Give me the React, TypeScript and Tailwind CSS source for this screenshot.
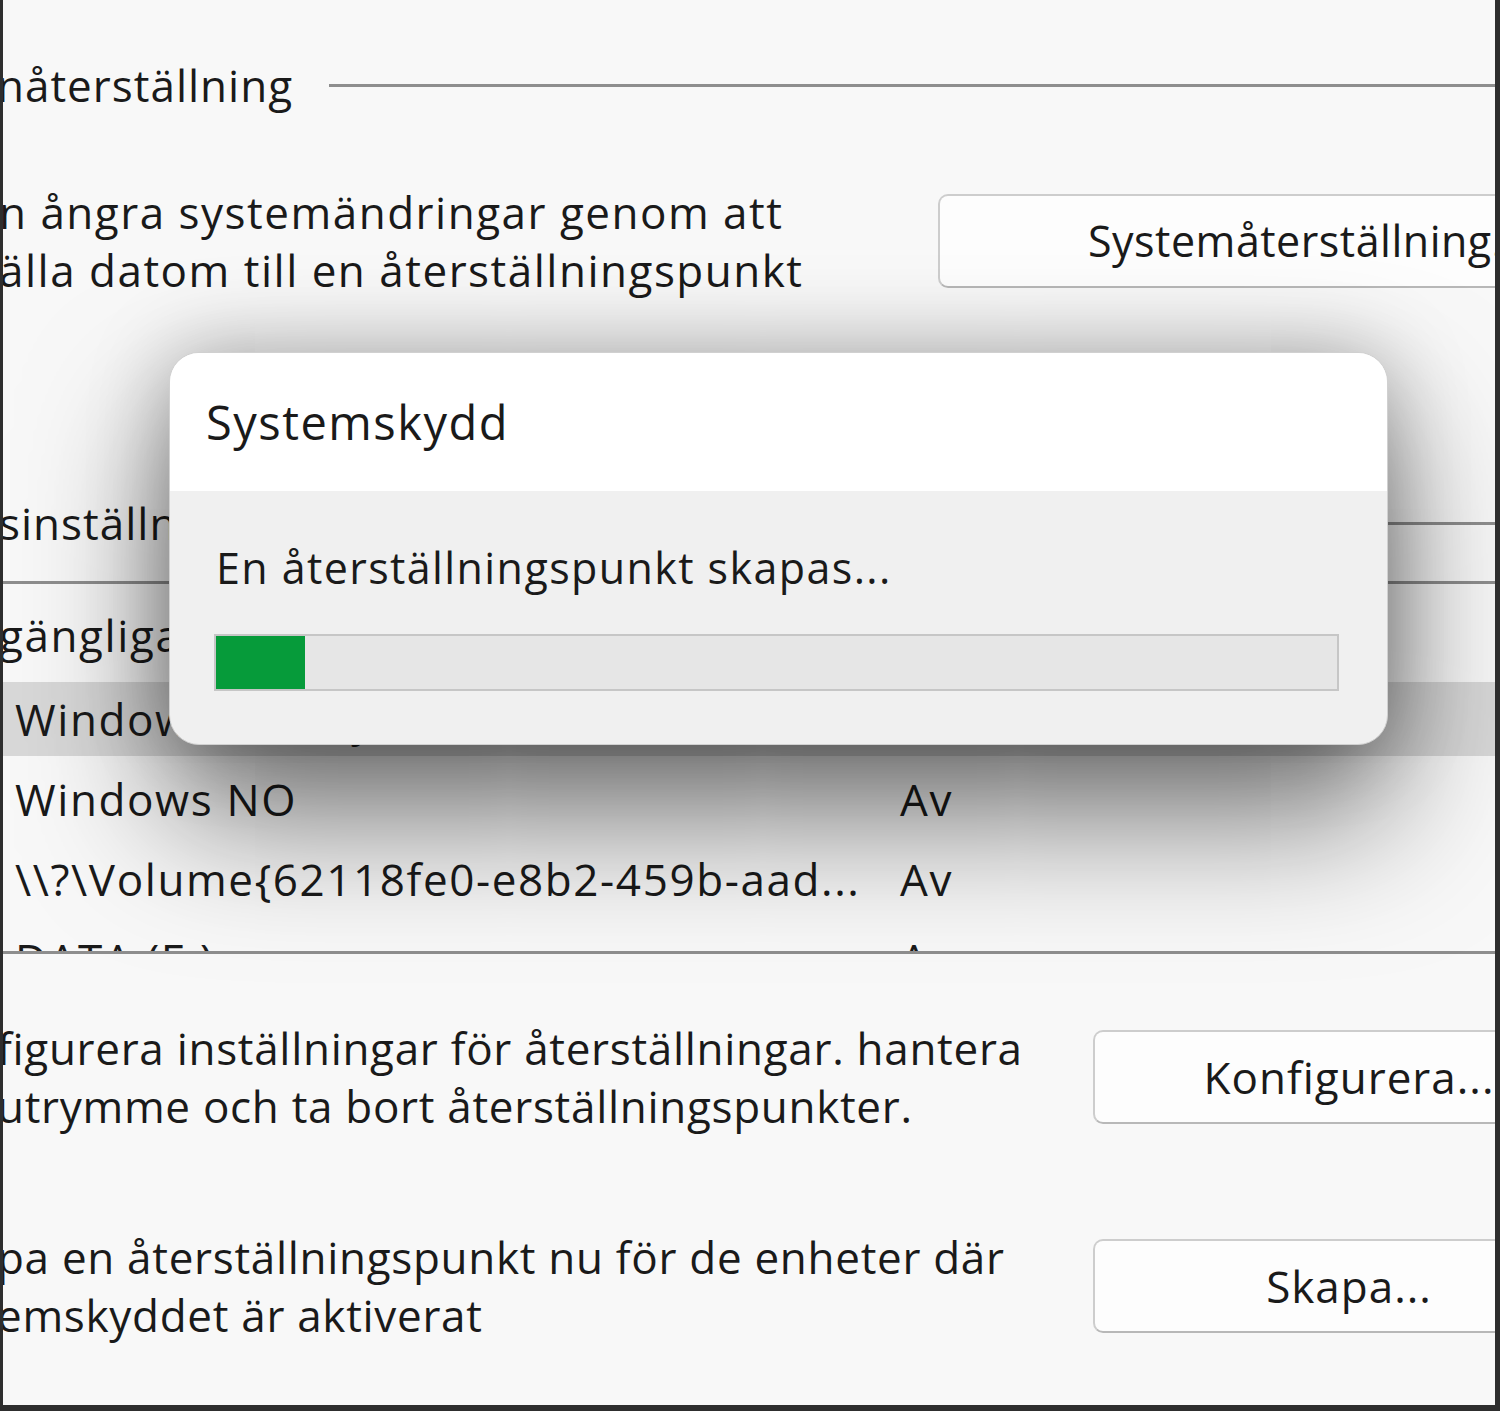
import React from "react";

const font = { fontFamily: '"Open Sans", "Noto Sans", sans-serif' };

export default function App() {
  return (
    <div
      className="relative w-[1500px] h-[1411px] overflow-hidden bg-[#f8f8f8] border-l-[3px] border-r-[5px] border-b-[6px] border-[#2e2e2e] text-[#1a1a1a] tracking-[1px]"
      style={font}
    >
      {/* Section: Systemåterställning */}
      <div className="pt-[56px] flex items-center h-[114px]">
        <span className="text-[44px] leading-[58px] whitespace-nowrap -ml-[6px]">nåterställning</span>
        <div className="ml-[36px] flex-1 h-[3px] bg-[#8e8e8e]" />
      </div>

      <div className="mt-[69px] flex items-center">
        <div className="w-[939px] shrink-0 text-[44px] leading-[58px] whitespace-nowrap -ml-[4px] tracking-[1.5px]">
          n ångra systemändringar genom att
          <br />
          älla datom till en återställningspunkt
        </div>
        <div className="w-[620px] h-[94px] shrink-0 rounded-[10px] border-2 border-[#cdcdcd] border-b-[#b8b8b8] bg-[#fdfdfd] flex items-center pl-[148px] text-[43px] tracking-[0.5px] whitespace-nowrap">
          Systemåterställning...
        </div>
      </div>

      {/* Section: Skyddsinställningar */}
      <div className="mt-[195px] flex items-center h-[58px]">
        <span className="text-[44px] leading-[58px] whitespace-nowrap -ml-[4px]">sinställningar</span>
        <div className="ml-[40px] flex-1 h-[3px] bg-[#8e8e8e]" />
      </div>

      <div className="mt-[29px] h-[373px] border-y-[3px] border-[#8e8e8e] overflow-hidden text-[44px] tracking-[1.6px]">
        <div className="h-[95px] flex items-center pt-[6px]">
          <span className="w-[895px] shrink-0 whitespace-nowrap -ml-[4px]">gängliga enheter</span>
          <span>Skydd</span>
        </div>
        <div className="h-[80px] py-[3px]">
          <div className="h-full bg-[#d8d8d8] flex items-center">
            <span className="w-[897px] shrink-0 pl-[12px] whitespace-nowrap">Windows (C:) (System)</span>
            <span>På</span>
          </div>
        </div>
        <div className="h-[80px] flex items-center">
          <span className="w-[897px] shrink-0 pl-[12px] whitespace-nowrap">Windows NO</span>
          <span>Av</span>
        </div>
        <div className="h-[80px] flex items-center">
          <span className="w-[897px] shrink-0 pl-[12px] whitespace-nowrap">\\?\Volume{"{"}62118fe0-e8b2-459b-aad...</span>
          <span>Av</span>
        </div>
        <div className="h-[80px] flex items-center">
          <span className="w-[897px] shrink-0 pl-[12px] whitespace-nowrap">DATA (E:)</span>
          <span>Av...</span>
        </div>
      </div>

      {/* Konfigurera */}
      <div className="mt-[65px] flex items-center">
        <div className="w-[1096px] shrink-0 text-[44px] leading-[58px] whitespace-nowrap -ml-[6px] tracking-[0.7px]">
          figurera inställningar för återställningar. hantera
          <br />
          utrymme och ta bort återställningspunkter.
        </div>
        <div className="w-[512px] h-[94px] shrink-0 rounded-[10px] border-2 border-[#cdcdcd] border-b-[#b8b8b8] bg-[#fdfdfd] flex items-center justify-center text-[44px] whitespace-nowrap">
          Konfigurera...
        </div>
      </div>

      {/* Skapa */}
      <div className="mt-[93px] flex items-center">
        <div className="w-[1096px] shrink-0 text-[44px] leading-[58px] whitespace-nowrap -ml-[6px] tracking-[0.7px]">
          pa en återställningspunkt nu för de enheter där
          <br />
          emskyddet är aktiverat
        </div>
        <div className="w-[512px] h-[94px] shrink-0 rounded-[10px] border-2 border-[#cdcdcd] border-b-[#b8b8b8] bg-[#fdfdfd] flex items-center justify-center text-[44px] whitespace-nowrap">
          Skapa...
        </div>
      </div>

      {/* Dialog overlay */}
      <div className="absolute left-[166px] top-[352px] w-[1219px] h-[393px] rounded-[30px] overflow-hidden border border-[#d0d0d0] bg-[#f0f0f0] shadow-[0_70px_140px_rgba(0,0,0,0.55),0_0_80px_rgba(0,0,0,0.25)]">
        <div className="h-[138px] bg-white flex items-center pl-[36px] text-[47px] tracking-[1.5px]">Systemskydd</div>
        <div className="pt-[48px] pl-[46px]">
          <div className="text-[43px] leading-[58px] whitespace-nowrap tracking-[1.4px]">En återställningspunkt skapas...</div>
          <div className="mt-[37px] -ml-[2px] w-[1125px] h-[57px] border-2 border-[#c6c6c6] bg-[#e6e6e6]">
            <div className="h-full w-[89px] bg-[#069b3a]" />
          </div>
        </div>
      </div>
    </div>
  );
}
